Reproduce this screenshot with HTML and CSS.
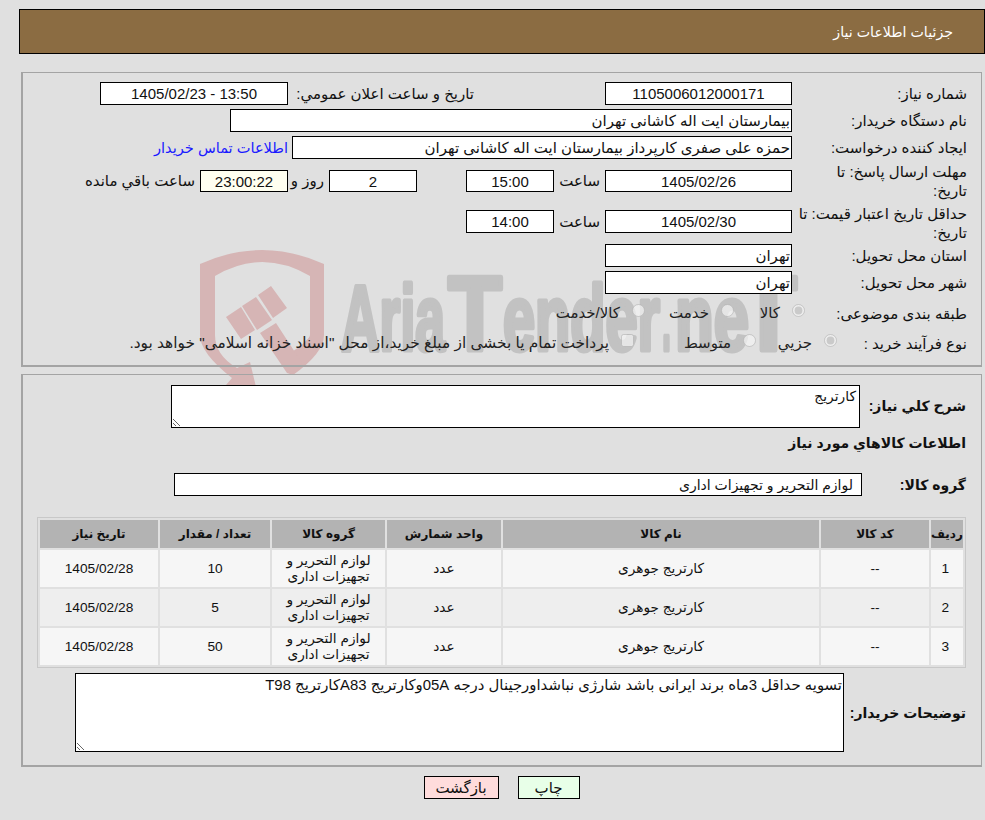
FILE: index.html
```html
<!DOCTYPE html>
<html lang="fa" dir="rtl">
<head>
<meta charset="utf-8">
<title>جزئیات اطلاعات نیاز</title>
<link rel="stylesheet" href="styles.css">
</head>
<body>
<header class="page-head"><h1>جزئیات اطلاعات نیاز</h1></header>
<main class="stack">
<svg class="watermark" viewBox="0 0 620 160" aria-hidden="true">
<path class="wm-red" d="M10 29Q72 1 134 29V100Q134 118 103 140L92 124Q120 105 120 100V41Q72 13 25 41V100Q25 120 47 133L60 127L66 152L36 150L42 143Q10 118 10 100Z"/>
<path class="wm-red" d="M36 82L51 72L65 95L51 104ZM52 71L66 62L82 85L67 95ZM68 60L81 51L97 73L83 83ZM70 98L86 88L112 128L103 140L97 138Z"/>
<text class="wm-text" x="151" y="115" textLength="104" lengthAdjust="spacingAndGlyphs">Aria</text>
<text class="wm-text wm-cap" x="258" y="115" textLength="54" lengthAdjust="spacingAndGlyphs">T</text>
<text class="wm-text" x="313" y="115" textLength="157" lengthAdjust="spacingAndGlyphs">ender</text>
<text class="wm-text" x="472" y="115" textLength="9" lengthAdjust="spacingAndGlyphs">.</text>
<text class="wm-text" x="485" y="115" textLength="74" lengthAdjust="spacingAndGlyphs">ne</text>
<text class="wm-text wm-cap" x="550" y="115" textLength="57" lengthAdjust="spacingAndGlyphs">T</text>
</svg>
<section class="panel panel-top">
<div class="row r1"><span class="lbl">شماره نیاز:</span><input class="f f-m" readonly value="1105006012000171"><span class="lbl2 l-announce">تاریخ و ساعت اعلان عمومي:</span><input class="f f-m" readonly value="13:50 - 1405/02/23"></div>
<div class="row r2"><span class="lbl">نام دستگاه خریدار:</span><input class="f f-buyer ta-r" readonly value="بیمارستان ایت اله کاشانی تهران"></div>
<div class="row r3"><span class="lbl">ایجاد کننده درخواست:</span><input class="f f-creator ta-r" readonly value="حمزه علی صفری کارپرداز بیمارستان ایت اله کاشانی تهران"><a class="contact" href="#">اطلاعات تماس خریدار</a></div>
<div class="row r4"><span class="lbl">مهلت ارسال پاسخ: تا تاریخ:</span><input class="f f-m" readonly value="1405/02/26"><span class="hour">ساعت</span><input class="f f-s" readonly value="15:00"><input class="f f-s days" readonly value="2"><span class="word-day">روز و</span><input class="f f-s timer" readonly value="23:00:22"><span class="word">ساعت باقي مانده</span></div>
<div class="row r5"><span class="lbl">حداقل تاریخ اعتبار قیمت: تا تاریخ:</span><input class="f f-m" readonly value="1405/02/30"><span class="hour">ساعت</span><input class="f f-s" readonly value="14:00"></div>
<div class="row r6"><span class="lbl">استان محل تحویل:</span><input class="f f-m ta-r" readonly value="تهران"></div>
<div class="row r7"><span class="lbl">شهر محل تحویل:</span><input class="f f-m ta-r" readonly value="تهران"></div>
<div class="row r8"><span class="lbl">طبقه بندی موضوعی:</span>
<label class="opt o-goods"><input type="radio" name="a" checked disabled>کالا</label>
<label class="opt o-service"><input type="radio" name="a" disabled>خدمت</label>
<label class="opt"><input type="radio" name="a" disabled>کالا/خدمت</label></div>
<div class="row r9"><span class="lbl">نوع فرآیند خرید :</span>
<label class="opt o-minor"><input type="radio" name="b" checked disabled>جزيي</label>
<label class="opt o-mid"><input type="radio" name="b" disabled>متوسط</label>
<label class="opt o-long"><input type="checkbox" disabled>پرداخت تمام یا بخشی از مبلغ خرید،از محل "اسناد خزانه اسلامی" خواهد بود.</label></div>
</section>
<section class="panel panel-bottom">
<div class="b-row b-desc"><span class="blbl">شرح کلي نیاز:</span><textarea class="ta ta-desc" readonly>کارتریج</textarea></div>
<h2 class="goods-title">اطلاعات کالاهاي مورد نیاز</h2>
<div class="b-row b-group"><span class="blbl">گروه کالا:</span><input class="f f-group ta-r" readonly value="لوازم التحریر و تجهیزات اداری"></div>
<table class="items">
<thead><tr><th class="c1">ردیف</th><th class="c2">کد کالا</th><th class="c3">نام کالا</th><th class="c4">واحد شمارش</th><th class="c5">گروه کالا</th><th class="c6">تعداد / مقدار</th><th class="c7">تاریخ نیاز</th></tr></thead>
<tbody>
<tr><td>1</td><td>--</td><td>کارتریج جوهری</td><td>عدد</td><td>لوازم التحریر و تجهیزات اداری</td><td>10</td><td>1405/02/28</td></tr>
<tr><td>2</td><td>--</td><td>کارتریج جوهری</td><td>عدد</td><td>لوازم التحریر و تجهیزات اداری</td><td>5</td><td>1405/02/28</td></tr>
<tr><td>3</td><td>--</td><td>کارتریج جوهری</td><td>عدد</td><td>لوازم التحریر و تجهیزات اداری</td><td>50</td><td>1405/02/28</td></tr>
</tbody>
</table>
<div class="b-row b-notes"><span class="blbl">توضیحات خریدار:</span><textarea class="ta ta-notes" readonly>تسویه حداقل 3ماه برند ایرانی باشد شارژی نباشداورجینال درجه 05Aوکارتریج A83کارتریج T98</textarea></div>
</section>
<div class="actions"><button class="btn btn-print" type="button">چاپ</button><button class="btn btn-back" type="button">بازگشت</button></div>
</main>
</body>
</html>
```
FILE: styles.css
```css
* { box-sizing: border-box; }
html, body { margin: 0; padding: 0; }
body { background: #e0e0e0; color: #111; font: 15px/18px "Liberation Sans", "DejaVu Sans", sans-serif; height: 820px; overflow: hidden; }
.page-head { margin: 9px 0 0 19px; height: 45px; background: #8b6c42; border: 1px solid #000; display: flex; align-items: center; padding-right: 31px; }
.page-head h1 { margin: 0; font-size: 14.2px; font-weight: 400; color: #fff; }
.stack { position: relative; margin: 18px 3px 0 21px; }
.watermark { position: absolute; left: 169px; top: 163px; width: 620px; height: 160px; z-index: 0; direction: ltr; }
.wm-red { fill: #d6b5b5; }
.wm-text { fill: #c2c2c2; stroke: #c2c2c2; stroke-width: 5px; stroke-linejoin: round; font: 700 92px "Liberation Sans", sans-serif; direction: ltr; }
.wm-cap { font-size: 106px; }
.panel { position: relative; z-index: 1; border: 2px solid #a4a4a4; border-width: 1px 1px 2px 2px; padding-right: 14px; }
.panel-top { height: 295px; padding-top: 9px; }
.panel-bottom { height: 393px; margin-top: 7px; padding-top: 10px; padding-right: 15px; }
.row { display: flex; align-items: center; }
.r1, .r2, .r3 { height: 23px; margin-bottom: 4px; }
.r4 { height: 22px; margin-top: 11px; }
.r5 { height: 23px; margin-top: 18px; }
.r6 { height: 23px; margin-top: 11px; }
.r7 { height: 23px; margin-top: 4px; }
.r8 { height: 20px; margin-top: 9px; }
.r9 { height: 20px; margin-top: 10px; }
.lbl { width: 175px; flex: none; padding-left: 6px; line-height: 19px; }
.r4 .lbl { padding-left: 14px; }
.r5 .lbl { padding-top: 3px; }
.r8 .lbl { width: 162px; padding-left: 0; white-space: nowrap; }
.r9 .lbl { width: 130px; padding-left: 0; white-space: nowrap; }
.f { height: 23px; border: 1px solid #000; background: #fff; color: #111; font: inherit; text-align: center; padding: 0 4px; outline: 0; flex: none; }
.r4 .f { height: 22px; }
.ta-r { text-align: right; padding: 0 1px; }
.f-m { width: 187px; }
.f-s { width: 88px; }
.f-buyer { width: 562px; }
.f-creator { width: 500px; }
.l-announce { margin-right: 131px; width: 181px; white-space: nowrap; }
.lbl2 { margin-left: 5px; flex: none; }
.r1 .f-m:last-child { width: 188px; }
.contact { color: #1a1aff; font-size: 14.6px; text-decoration: none; margin-right: 4px; white-space: nowrap; }
.hour { width: 51px; flex: none; padding-right: 5px; }
.days { margin-right: 49px; }
.word-day { width: 41px; flex: none; padding-right: 5px; white-space: nowrap; }
.word { margin-right: 5px; white-space: nowrap; }
.timer { background: #fffff0; }
.opt { display: flex; align-items: center; white-space: nowrap; flex: none; color: #222; }
.opt input { margin: 0 0 6px 12px; width: 13px; height: 13px; flex: none; }
.o-goods { width: 71px; }
.o-service { width: 89px; }
.o-minor { width: 81px; }
.o-mid { width: 122px; }
.o-long { font-size: 15.4px; }
.b-row { display: flex; align-items: center; }
.blbl { flex: none; font-size: 14px; font-weight: 700; white-space: nowrap; }
.b-desc .blbl { width: 106px; padding-bottom: 2px; }
.ta { display: block; border: 1px solid #000; background: #fff; color: #111; font: inherit; padding: 1px; outline: 0; margin: 0; border-radius: 0; }
.ta-desc { width: 689px; height: 43px; font-size: 13.8px; padding: 2px 3px; }
.goods-title { margin: 0; height: 30px; display: flex; align-items: center; font-size: 14px; font-weight: 700; }
.b-group { margin-top: 15px; }
.b-group .blbl { width: 104px; }
.f-group { width: 688px; font-size: 14px; padding-right: 8px; }
.items { width: 927px; margin: 21px 0 0 0; border-collapse: separate; border-spacing: 2px; background: #e0e0e0; border: 1px solid #c8c8c8; table-layout: fixed; font-size: 13.7px; line-height: 16px; text-align: center; }
.items th { height: 28px; background: #b3b3b3; font-size: 12px; font-weight: 700; padding: 0; color: #111; }
.items td { height: 37px; padding: 0 14px; background: #f6f6f6; }
.items tbody tr:nth-child(2) td { background: #eeeeee; }
.c1 { width: 32px; } .c2 { width: 108px; } .c3 { width: 316px; } .c4 { width: 114px; } .c5 { width: 113px; } .c6 { width: 110px; } .c7 { width: 118px; }
.b-notes { margin-top: 5px; }
.b-notes .blbl { width: 122px; }
.ta-notes { width: 769px; height: 79px; padding: 2px 1px; font-size: 14.9px; }
.actions { display: flex; justify-content: center; gap: 19px; margin-top: 9px; }
.btn { height: 23px; border: 1px solid #000; font: inherit; color: #111; padding: 0; border-radius: 0; }
.btn-print { width: 62px; background: #e8ffe8; }
.btn-back { width: 75px; background: #ffdcdc; }
```
